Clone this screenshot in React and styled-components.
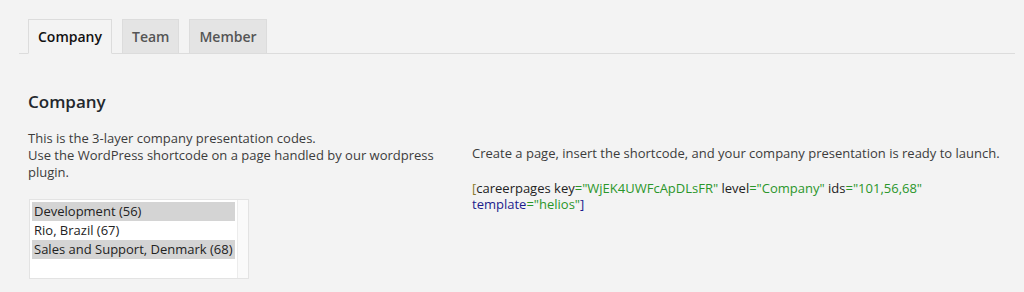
import React from 'react';
import styled, { createGlobalStyle } from 'styled-components';

const tabs = ['Company', 'Team', 'Member'];

const departments = [
  { label: 'Development (56)', selected: true },
  { label: 'Rio, Brazil (67)', selected: false },
  { label: 'Sales and Support, Denmark (68)', selected: true },
];

function App() {
  return (
    <Page>
      <GlobalStyle />
      <TabBar>
        {tabs.map((t, i) => (
          <Tab key={t} $active={i === 0}>
            {t}
          </Tab>
        ))}
      </TabBar>

      <Content>
        <Heading>Company</Heading>
        <Columns>
          <div>
            <Text>
              This is the 3-layer company presentation codes.
              <br />
              Use the WordPress shortcode on a page handled by our wordpress plugin.
            </Text>
            <ListBox role="listbox" aria-multiselectable="true">
              <Options>
                {departments.map((d) => (
                  <Option key={d.label} $selected={d.selected}>
                    {d.label}
                  </Option>
                ))}
              </Options>
              <Track />
            </ListBox>
          </div>

          <RightCol>
            <Text>
              Create a page, insert the shortcode, and your company presentation is ready to launch.
            </Text>
            <Code>
              <Bracket>[</Bracket>careerpages key<Str>="WjEK4UWFcApDLsFR"</Str> level
              <Str>="Company"</Str> ids<Str>="101,56,68"</Str> <Attr>template</Attr>
              <Str>="helios"</Str>
              <Attr>]</Attr>
            </Code>
          </RightCol>
        </Columns>
      </Content>
    </Page>
  );
}

export default App;

const GlobalStyle = createGlobalStyle`
  html, body {
    margin: 0;
    background: #f3f3f3;
  }
  body {
    font-family: "Open Sans", "Liberation Sans", sans-serif;
    color: #444;
  }
`;

const Page = styled.div`
  width: 1024px;
  height: 292px;
  overflow: hidden;
  background: #f3f3f3;
`;

const TabBar = styled.nav`
  display: flex;
  gap: 10px;
  margin: 0 9px 0 19px;
  padding: 19px 0 0 9px;
  border-bottom: 1px solid #dcdcdc;
`;

const Tab = styled.div`
  padding: 5px 9px;
  line-height: 23px;
  font-size: 14px;
  font-weight: 600;
  margin-bottom: -1px;
  border: 1px solid #dcdcdc;
  border-bottom-color: ${(p) => (p.$active ? '#f3f3f3' : '#dcdcdc')};
  background: ${(p) => (p.$active ? '#f3f3f3' : '#e4e4e4')};
  color: ${(p) => (p.$active ? '#111' : '#555')};
`;

const Content = styled.div`
  padding: 36px 9px 0 28px;
`;

const Heading = styled.h2`
  margin: 0 0 17px;
  font-size: 17px;
  line-height: 23px;
  font-weight: 600;
  color: #23282d;
`;

const Columns = styled.div`
  display: grid;
  grid-template-columns: 420px 1fr;
  column-gap: 24px;
`;

const RightCol = styled.div`
  padding-top: 15px;
`;

const Text = styled.p`
  margin: 0 0 18px;
  font-size: 13px;
  line-height: 17px;
  color: #3c3c3c;
`;

const ListBox = styled.div`
  display: flex;
  width: 218px;
  height: 78px;
  margin-left: 1px;
  border: 1px solid #e3e3e3;
  background: #fff;
`;

const Options = styled.div`
  flex: 1;
  padding: 2px 2px 0 2px;
`;

const Option = styled.div`
  height: 19px;
  line-height: 19px;
  padding-left: 2px;
  font-size: 13px;
  color: #222;
  background: ${(p) => (p.$selected ? '#d4d4d4' : 'transparent')};
  white-space: nowrap;
`;

const Track = styled.div`
  width: 10px;
  border-left: 1px solid #ececec;
  background: #fafafa;
`;

const Code = styled.p`
  margin: 0;
  font-size: 13px;
  line-height: 16px;
  color: #222;
`;

const Bracket = styled.span`
  color: #8a7a2a;
`;

const Str = styled.span`
  color: #2a962a;
`;

const Attr = styled.span`
  color: #1c1c8c;
`;
